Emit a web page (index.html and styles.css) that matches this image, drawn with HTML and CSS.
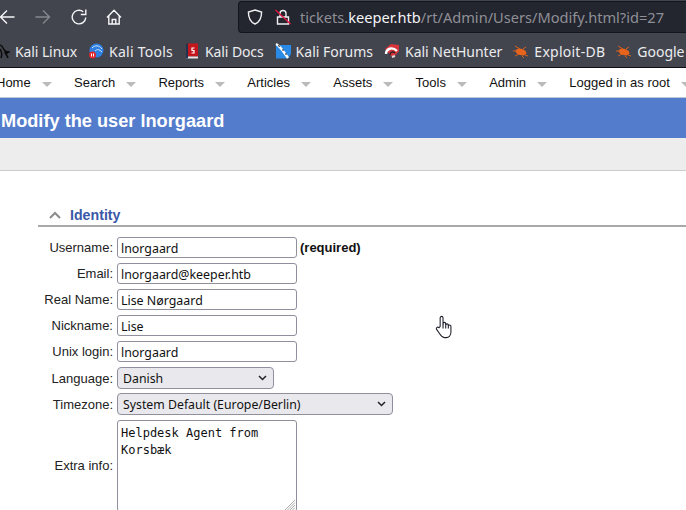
FILE: index.html
```html
<!DOCTYPE html>
<html>
	<head>
		<meta charset="utf-8">
		<title>Modify the user lnorgaard</title>
		<link rel="stylesheet" href="styles.css">
	</head>
	<body>
		<div class="toolbar">
			<div class="nav-btns">
				<svg class="tb-icon back" viewBox="0 0 16 16"><path d="M15.500 8H1.500M8 1.500L1.500 8 8 14.500"/></svg>
				<svg class="tb-icon fwd" viewBox="0 0 16 16"><path d="M.5 8h14M8 1.500L14.500 8 8 14.500"/></svg>
				<svg class="tb-icon reload" viewBox="0 0 16 16"><path d="M14.800 8.500A6.800 6.800 0 1 1 12.300 2.800M14.800 .5v5h-5"/></svg>
				<svg class="tb-icon home" viewBox="0 0 16 16"><path d="M1 8.500L8 1.200l7 7.300M2.800 6.800V15h10.400V6.800M6.200 15v-4.500h3.600V15"/></svg>
			</div>
			<div class="urlbar">
				<svg class="shield" viewBox="0 0 16 16"><path d="M8 1L14.600 3c0 6-1.600 10-6.600 12C3 13 1.400 9 1.400 3z"/></svg>
				<svg class="lock" viewBox="0 0 16 16"><path class="lock-body" d="M2.500 8h11v7h-11zM5 8V4.500a3 3 0 0 1 6 0V8"/><path class="lock-slash" d="M.5 1l15 14"/></svg>
				<span class="url"><span class="dim">tickets.</span>keeper.htb<span class="dim">/rt/Admin/Users/Modify.html?id=27</span></span>
			</div>
		</div>

		<div class="bookmarks">
			<span class="bm bm-first bm-tight"><svg viewBox="0 0 16 16"><path class="dragon" d="M1 3c4-2 7-1 8 2 1 2 3 4 6 4-1 1-3 1-4 0 0 2 2 3 3 6M1 6c3-1 5 0 6 2 1 2 1 4 0 7M11 9c1 0 2 1 2 2"/></svg>Kali Linux</span>
			<span class="bm bm-wide"><svg viewBox="0 0 16 16"><circle cx="8.500" cy="7.500" r="7" fill="#2e7fe0"/><path d="M4 5c3-3 7-3 10 1M7 8c2-2 4-2 7 1" fill="none" stroke="#cfe4fa" stroke-width="1"/><circle cx="4.500" cy="12" r="3.500" fill="#e2262c"/><path d="M3.500 10.500v3M5.500 10.500v3" stroke="#fff"/></svg>Kali Tools</span>
			<span class="bm bm-tight"><svg viewBox="0 0 16 16"><path fill="#c4161c" d="M2 .5h12v13H2z"/><path fill="#e8e8e8" d="M2 13.500h12v2H2z"/><path fill="#23324f" d="M2 .5h2v15H2z"/><path d="M10.500 5H8v2.500h2V10H7.500" fill="none" stroke="#fff" stroke-width="1.200"/></svg>Kali Docs</span>
			<span class="bm"><svg viewBox="0 0 16 16"><path fill="#2a8ae8" d="M1 2h15v9l-3 4.500H1z"/><path d="M1 1c4 2 7 7 12 14" fill="none" stroke="#fff" stroke-width="2.400"/><path d="M3 2.500l2 1M7 7l2 0M10 11l2 0" stroke="#222"/></svg>Kali Forums</span>
			<span class="bm"><svg viewBox="0 0 16 16"><path fill="#d9333c" d="M1 6L7 1l8 1v6l-6 7z"/><path d="M2 11c0-5 6-8 11-3" fill="none" stroke="#fff" stroke-width="2.400"/><path d="M6 12c0-3 3-4 5-2" fill="none" stroke="#222" stroke-width="1.400"/><path d="M8 14l3-1" stroke="#ddd" stroke-width="2"/></svg>Kali NetHunter</span>
			<span class="bm bm-wide"><svg viewBox="0 0 16 16"><ellipse cx="8" cy="9" rx="5.500" ry="3.200" fill="#e8631c" transform="rotate(15 8 9)"/><path d="M2 3l5 3M0 8h4M2 13l4-2M9 13l2 2M13 4l-3 2M12 12l3 1" stroke="#d8601f" fill="none"/></svg>Exploit-DB</span>
			<span class="bm"><svg viewBox="0 0 16 16"><ellipse cx="8" cy="9" rx="5.500" ry="3.200" fill="#e8631c" transform="rotate(15 8 9)"/><path d="M2 3l5 3M0 8h4M2 13l4-2M9 13l2 2M13 4l-3 2M12 12l3 1" stroke="#d8601f" fill="none"/></svg>Google</span>
		</div>

		<ul class="menu">
			<li>Home</li>
			<li>Search</li>
			<li>Reports</li>
			<li>Articles</li>
			<li>Assets</li>
			<li>Tools</li>
			<li>Admin</li>
			<li>Logged in as root</li>
		</ul>

		<h1 class="title">Modify the user lnorgaard</h1>
		<div class="page-menu"></div>

		<div class="section">
			<div class="section-head">
				<svg class="chev" viewBox="0 0 12 8"><path d="M1 7l5-5 5 5"/></svg>
				<span>Identity</span>
			</div>
			<form class="form">
				<label class="lbl-text">Username:</label>
				<div class="field"><input type="text" value="lnorgaard"> <b>(required)</b></div>
				<label class="lbl-text">Email:</label>
				<div class="field"><input type="text" value="lnorgaard@keeper.htb"></div>
				<label class="lbl-text">Real Name:</label>
				<div class="field"><input type="text" value="Lise Nørgaard"></div>
				<label class="lbl-text">Nickname:</label>
				<div class="field"><input type="text" value="Lise"></div>
				<label class="lbl-text">Unix login:</label>
				<div class="field"><input type="text" value="lnorgaard"></div>
				<label>Language:</label>
				<div class="field"><select class="sel-lang"><option>Danish</option></select></div>
				<label>Timezone:</label>
				<div class="field"><select class="sel-tz"><option>System Default (Europe/Berlin)</option></select></div>
				<label>Extra info:</label>
				<div class="field field-area">
					<textarea>Helpdesk Agent from
Korsbæk</textarea>
					<svg class="grip" viewBox="0 0 12 12"><path d="M11 1L1 11M11 3.500L3.500 11M11 6L6 11M11 8.500L8.500 11"/></svg>
				</div>
			</form>
		</div>

		<svg class="cursor" viewBox="0 0 18 26"><path d="M5 12V3.200c0-2.400 3-2.400 3 0V10l0-1c0-1.800 2.800-1.800 2.800 0v1.500c0-1.700 2.700-1.700 2.700 0v1c0-1.600 2.700-1.600 2.700 0v6.500c0 3-2 5.500-5 5.500H9.500c-2.500 0-3.500-1.500-5-4L1.300 15c-1-1.800 1-3.200 2.500-1.800z"/><path d="M8 9v5M10.800 10v4M13.500 11v3"/></svg>
	</body>
</html>
```

FILE: styles.css
```css
*{
	box-sizing: border-box;
}
html,body{
	margin: 0;
	padding: 0;
	height: 510px;
	overflow: hidden;
	background: #fff;
	font-family: "Liberation Sans", sans-serif;
	font-size: 13px;
	color: #1a1a1a;
}

/* browser chrome */
.toolbar{
	display: flex;
	align-items: center;
	height: 34px;
	background: #42454e;
}
.nav-btns{
	display: flex;
	align-items: center;
	width: 238px;
	flex: none;
}
.tb-icon{
	width: 16px;
	height: 16px;
	fill: none;
	stroke: #f6f6f8;
	stroke-width: 1.400;
}
.back{
	margin-left: -1px;
}
.fwd{
	margin-left: 20px;
	stroke: #85878d;
}
.reload{
	margin-left: 20px;
}
.home{
	margin-left: 19px;
}
.urlbar{
	display: flex;
	align-items: center;
	flex: 1;
	height: 32px;
	background: #23252f;
	border: 1px solid #15161c;
	border-right: 0;
	border-radius: 4px 0 0 4px;
}
.shield{
	width: 16px;
	height: 16px;
	margin-left: 8px;
	fill: none;
	stroke: #f0f0f2;
	stroke-width: 1.400;
}
.lock{
	width: 16px;
	height: 16px;
	margin-left: 12px;
	fill: none;
}
.lock-body{
	stroke: #f0f0f2;
	stroke-width: 1.400;
}
.lock-slash{
	stroke: #e0173f;
	stroke-width: 1.400;
}
.url{
	margin-left: 9px;
	font-family: "Noto Sans", sans-serif;
	font-size: 14.620px;
	color: #f4f4f6;
	white-space: nowrap;
}
.dim{
	color: #8f9096;
}

.bookmarks{
	display: flex;
	align-items: center;
	height: 34px;
	padding-top: 1px;
	background: #42454e;
	border-bottom: 1px solid #0e0e12;
	font-family: "Noto Sans", sans-serif;
	font-size: 14px;
	color: #ececee;
	white-space: nowrap;
	overflow: hidden;
}
.bm{
	display: flex;
	align-items: center;
	flex: none;
	gap: 5px;
	margin-right: 11px;
}
.bm svg{
	width: 16px;
	height: 16px;
	flex: none;
}
.bm-first{
	margin-left: -6px;
}
.bm-wide{
	letter-spacing: .25px;
}
.bm-tight{
	letter-spacing: -.1px;
}
.dragon{
	fill: none;
	stroke: #0b0b0b;
	stroke-width: 1.500;
}

/* page */
.menu{
	display: flex;
	height: 29px;
	margin: 0 0 0 -4px;
	padding: 0;
	list-style: none;
	align-items: center;
	white-space: nowrap;
	color: #111;
}
.menu > li{
	display: flex;
	align-items: center;
	margin-right: 22.300px;
}
.menu > li::after{
	content: "";
	width: 0;
	height: 0;
	margin-left: 11px;
	margin-top: 3px;
	border-left: 5px solid transparent;
	border-right: 5px solid transparent;
	border-top: 5px solid #bbb;
}
.title{
	height: 41px;
	margin: 0;
	padding: 0 1px;
	background: #547ccc;
	border-top: 1px solid #bfc8d8;
	color: #fff;
	font-size: 18.200px;
	font-weight: bold;
	line-height: 47px;
}
.page-menu{
	height: 33px;
	background: #ededed;
	border-bottom: 1px solid #ccc;
}
.section{
	margin: 33px 0 0 38px;
}
.section-head{
	display: flex;
	align-items: center;
	height: 23px;
	padding-left: 11px;
	border-bottom: 2px solid #a9a9a9;
	color: #3a58a8;
	font-size: 14.200px;
	font-weight: bold;
}
.chev{
	width: 12px;
	height: 8px;
	margin-right: 9px;
	fill: none;
	stroke: #8c8c8c;
	stroke-width: 2;
}
.form{
	display: grid;
	grid-template-columns: 75px 1fr;
	column-gap: 4px;
	row-gap: 4px;
	margin-top: 10px;
	align-items: center;
}
.form > label{
	text-align: right;
	color: #222;
}
.form > .lbl-text{
	margin-bottom: 2px;
}
.field{
	display: flex;
	align-items: flex-start;
	gap: 3px;
	min-height: 22px;
}
.field b{
	color: #111;
	line-height: 22px;
}
.field-area{
	position: relative;
	margin-top: 1px;
}
input,textarea,select{
	margin: 0;
	border: 1px solid #8f8f9d;
	border-radius: 3px;
	color: #111;
	background: #fff;
}
input{
	width: 180px;
	height: 21px;
	padding: 1px 3px 0;
	font-family: "Noto Sans", sans-serif;
	font-size: 12.400px;
}
select{
	height: 22px;
	padding: 0 2px 0 5px;
	appearance: none;
	background: #e9e9ed url("data:image/svg+xml,%3Csvg xmlns='http://www.w3.org/2000/svg' width='9' height='6'%3E%3Cpath d='M1 1l3.500 3.500L8 1' fill='none' stroke='%23222' stroke-width='1.500'/%3E%3C/svg%3E") no-repeat right 6px center;
	border-radius: 4px;
	font-family: "Noto Sans", sans-serif;
	font-size: 12.300px;
}
.sel-lang{
	width: 157px;
}
.sel-tz{
	width: 276px;
}
textarea{
	width: 180px;
	height: 92px;
	padding: 4px 3px;
	font-family: "DejaVu Sans Mono", monospace;
	font-size: 12px;
	line-height: 17px;
	resize: none;
}
.grip{
	position: absolute;
	left: 167px;
	top: 79px;
	width: 12px;
	height: 12px;
	fill: none;
	stroke: #8a8a8a;
	stroke-width: .7;
}
.cursor{
	position: absolute;
	left: 435px;
	top: 315px;
	width: 18px;
	height: 25px;
	fill: #fff;
	stroke: #1c1c28;
	stroke-width: 1.100;
}
```
